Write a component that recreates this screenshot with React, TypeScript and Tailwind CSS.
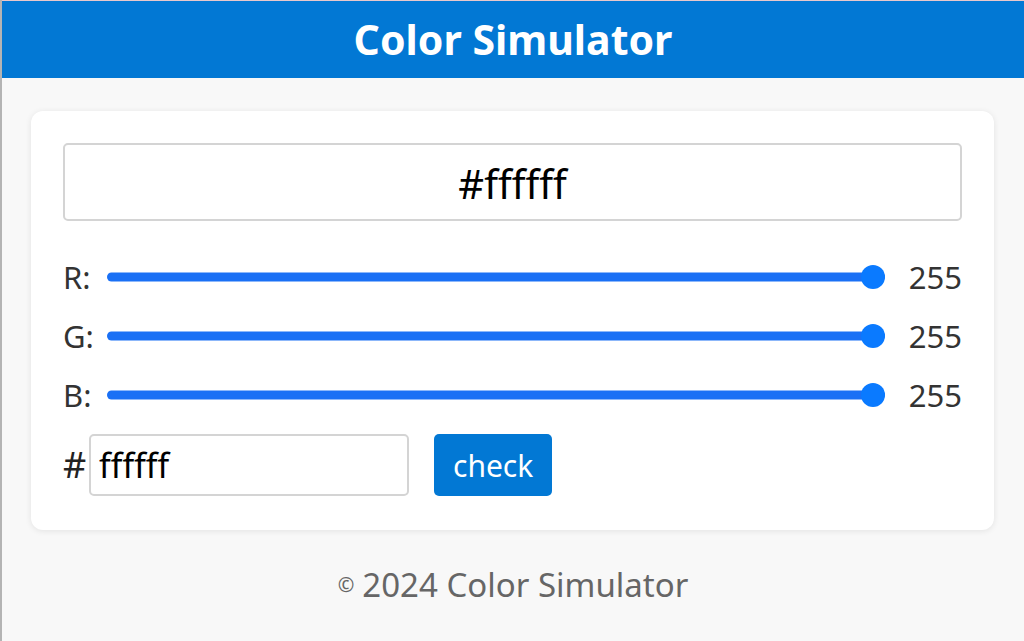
const channels = [
  { label: 'R', value: 255 },
  { label: 'G', value: 255 },
  { label: 'B', value: 255 },
]

function Slider({ value }: { value: number }) {
  const pct = (value / 255) * 100
  return (
    <div className="relative mr-[-3px] h-6 flex-1">
      <div className="absolute inset-x-0 top-1/2 h-[9px] -translate-y-1/2 rounded-full bg-[#1a70f5]" />
      <div
        className="absolute top-1/2 size-6 -translate-x-full -translate-y-1/2 rounded-full bg-[#0a7aff]"
        style={{ left: `${pct}%` }}
      />
    </div>
  )
}

export default function App() {
  const hex = 'ffffff'
  return (
    <div className="min-h-screen border-l-2 border-[#b4b4b4] bg-[#f8f8f8] font-['Noto_Sans','Liberation_Sans',sans-serif]">
      <header className="flex h-[78px] items-center justify-center border-t border-[#e8c8cc] bg-[#0278d4]">
        <h1 className="text-[41px] font-bold leading-none text-white">Color Simulator</h1>
      </header>

      <main className="ml-[29px] mr-[30px] mt-[33px] rounded-xl bg-white px-8 pb-[34px] pt-8 shadow-[0_1px_6px_rgba(0,0,0,0.09)]">
        <div className="flex h-[78px] items-center justify-center rounded-[5px] border-2 border-[#d4d4d4] pt-1 text-[40px] text-black">
          #{hex}
        </div>

        <div className="mt-9 flex flex-col gap-[19px]">
          {channels.map((c) => (
            <div key={c.label} className="flex h-10 items-center text-[31px] text-[#333]">
              <span className="w-11 shrink-0">{c.label}:</span>
              <Slider value={c.value} />
              <span className="ml-6 w-[56px] text-right">{c.value}</span>
            </div>
          ))}
        </div>

        <div className="mt-[19px] flex items-center">
          <span className="w-[26px] text-[36px] text-[#222]">#</span>
          <div className="flex h-[62px] w-[320px] items-center rounded-[5px] border-2 border-[#d4d4d4] px-2 text-[34px] text-black">
            {hex}
          </div>
          <button className="ml-[25px] h-[62px] rounded-[5px] bg-[#0278d4] px-[19px] text-[30px] text-white">
            check
          </button>
        </div>
      </main>

      <footer className="mt-[30px] flex items-center justify-center gap-[8px] text-[#666]">
        <span className="text-[20px]">©</span>
        <span className="text-[33px]">2024 Color Simulator</span>
      </footer>
    </div>
  )
}
